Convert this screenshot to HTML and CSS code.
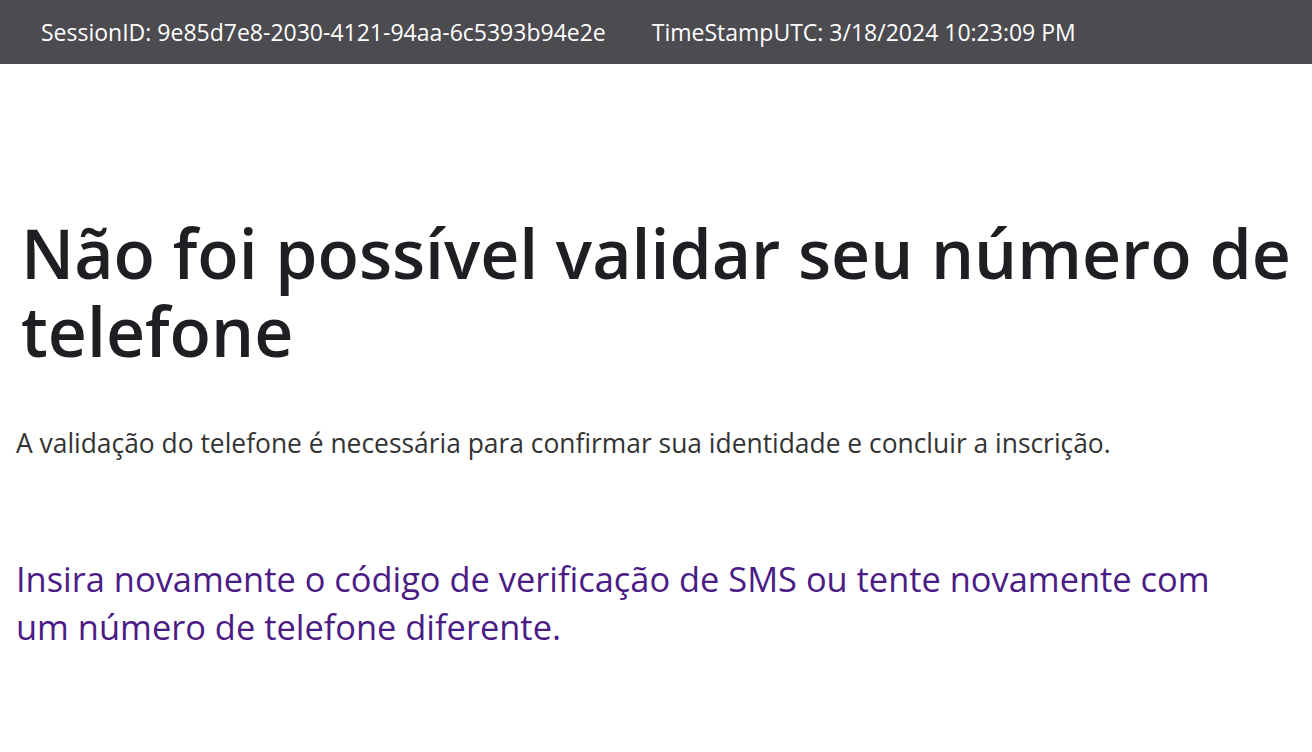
FILE: index.html
```html
<!DOCTYPE html>
<html lang="pt-BR">
<head>
<meta charset="utf-8">
<title>Erro</title>
<link rel="stylesheet" href="styles.css">
</head>
<body>
<header class="topbar">
  <span class="info">SessionID: 9e85d7e8-2030-4121-94aa-6c5393b94e2e</span>
  <span class="info">TimeStampUTC: 3/18/2024 10:23:09 PM</span>
</header>
<main class="content">
  <h1 class="title">Não foi possível validar seu número de telefone</h1>
  <p class="desc">A validação do telefone é necessária para confirmar sua identidade e concluir a inscrição.</p>
  <p class="hint">Insira novamente o código de verificação de SMS ou tente novamente com um número de telefone diferente.</p>
</main>
</body>
</html>
```
FILE: styles.css
```css
html, body {
  margin: 0;
  padding: 0;
  background: #ffffff;
  font-family: "Open Sans", "Noto Sans", sans-serif;
}
.topbar {
  height: 64px;
  background: #4c4b50;
  color: #ffffff;
  display: flex;
  align-items: center;
  gap: 46px;
  padding: 0 41px;
  font-size: 23px;
}
.content {
  padding: 0 16px;
}
.title {
  margin: 150px 0 0 5px;
  font-size: 67.9px;
  line-height: 78px;
  font-weight: 600;
  color: #1f1f23;
}
.desc {
  margin: 55px 0 0;
  font-size: 26.4px;
  line-height: 36px;
  color: #333333;
}
.hint {
  margin: 94px 0 0;
  max-width: 1225px;
  font-size: 34.4px;
  line-height: 48px;
  color: #4b1c85;
}
```
